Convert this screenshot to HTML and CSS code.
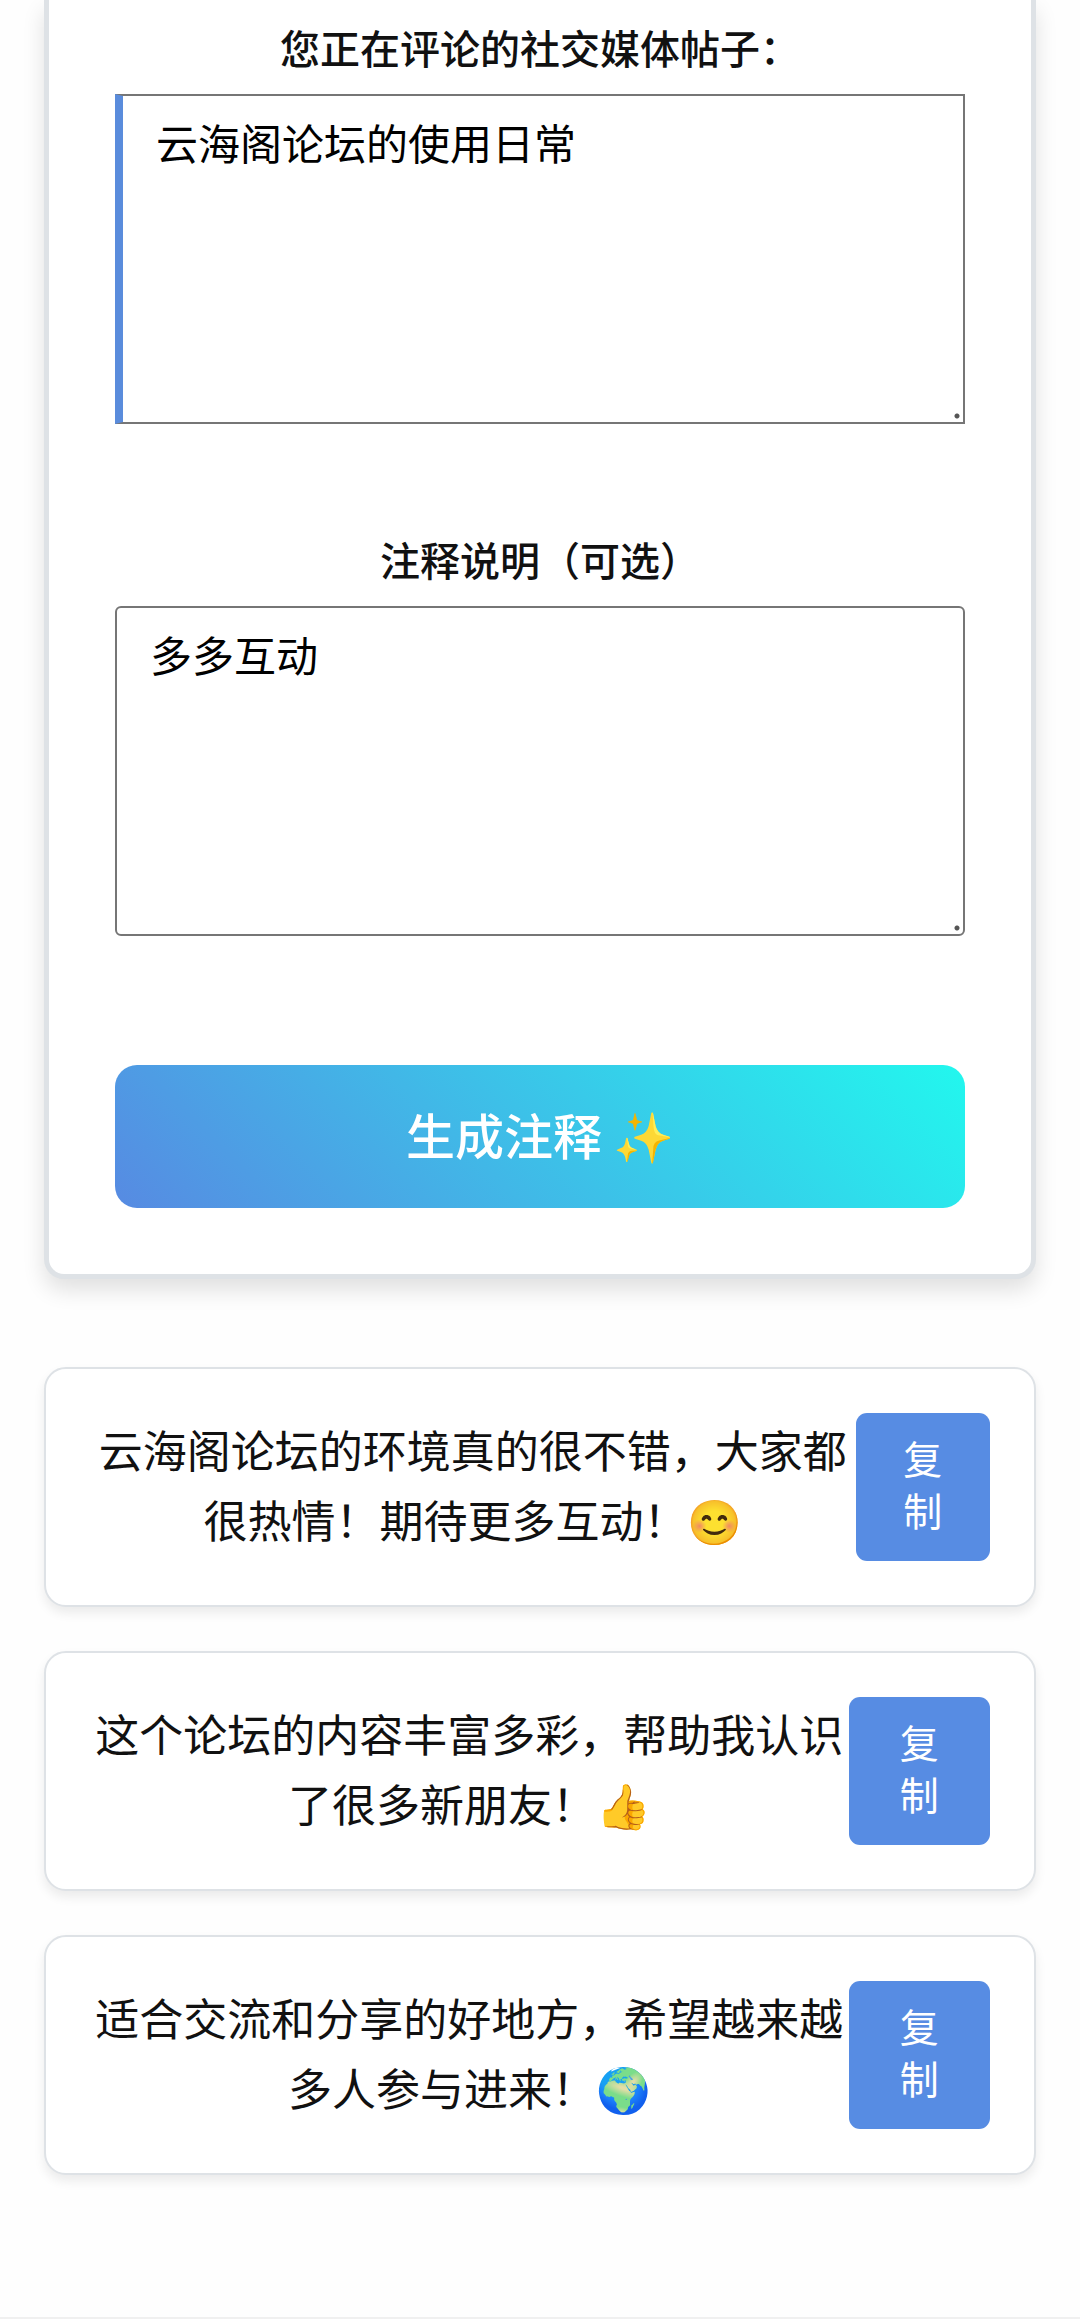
FILE: index.html
```html
<!DOCTYPE html>
<html lang="zh-CN">
<head>
<meta charset="utf-8">
<meta name="viewport" content="width=device-width, initial-scale=1">
<title>注释生成</title>
<link rel="stylesheet" href="styles.css">
</head>
<body>
<main class="page">
  <form class="panel">
    <div class="field">
      <label class="label" for="post">您正在评论的社交媒体帖子：</label>
      <textarea class="input input-accent" id="post">云海阁论坛的使用日常</textarea>
    </div>
    <div class="field">
      <label class="label" for="notes">注释说明（可选）</label>
      <textarea class="input" id="notes">多多互动</textarea>
    </div>
    <button class="generate" type="button">生成注释 ✨</button>
  </form>
  <section class="results">
    <article class="result">
      <p class="comment">云海阁论坛的环境真的很不错，大家都很热情！期待更多互动！😊</p>
      <button class="copy" type="button">复制</button>
    </article>
    <article class="result">
      <p class="comment">这个论坛的内容丰富多彩，帮助我认识了很多新朋友！👍</p>
      <button class="copy" type="button">复制</button>
    </article>
    <article class="result">
      <p class="comment">适合交流和分享的好地方，希望越来越多人参与进来！🌍</p>
      <button class="copy" type="button">复制</button>
    </article>
  </section>
</main>
</body>
</html>
```

FILE: styles.css
```css
* {
  box-sizing: border-box;
}

body {
  margin: 0;
  background: #fefefe;
  color: #111;
  font-family: "Noto Sans CJK SC", "Noto Color Emoji", sans-serif;
  font-size: 44px;
}

.page {
  padding: 0 44px 142px;
  border-bottom: 2px solid #f0f0f0;
}

.panel {
  display: flex;
  flex-direction: column;
  padding: 16px 66px 66px;
  background: #fff;
  border: 5px solid #dee2e6;
  border-top: 0;
  border-radius: 0 0 20px 20px;
  box-shadow: 0 11px 22px rgba(0, 0, 0, 0.12);
}

.field {
  display: flex;
  flex-direction: column;
  margin-bottom: 104px;
}

.field:last-of-type {
  margin-bottom: 129px;
}

.label {
  margin-bottom: 16px;
  font-size: 40px;
  font-weight: 500;
  line-height: 62px;
  text-align: center;
}

.input {
  width: 100%;
  height: 330px;
  padding: 20px 33px;
  border: 2px solid #767676;
  border-radius: 6px;
  background: #fff radial-gradient(circle, #555 2px, transparent 3px) no-repeat right 3px bottom 3px / 6px 6px;
  color: #000;
  font-family: inherit;
  font-size: 42px;
  line-height: 52px;
  resize: none;
}

.input-accent {
  border-left: 8px solid #5a8cdc;
  border-radius: 0;
}

.generate {
  padding: 33px 36px 39px;
  border: 0;
  border-radius: 22px;
  background: linear-gradient(45deg, #578ae2, #22f7ee);
  color: #fff;
  font-family: inherit;
  font-size: 49px;
  font-weight: 500;
  line-height: 71px;
}

.results {
  display: flex;
  flex-direction: column;
  gap: 44px;
  margin-top: 88px;
}

.result {
  display: flex;
  align-items: center;
  padding: 44px;
  background: #fff;
  border: 2px solid #dee2e6;
  border-radius: 22px;
  box-shadow: 0 6px 11px rgba(0, 0, 0, 0.08);
}

.comment {
  margin: 0;
  padding-bottom: 6px;
  line-height: 70px;
  text-align: center;
}

.copy {
  padding: 18px 44px 26px;
  border: 0;
  border-radius: 11px;
  background: #578ce3;
  color: #fff;
  font-family: inherit;
  font-size: 39px;
  line-height: 52px;
}
```
